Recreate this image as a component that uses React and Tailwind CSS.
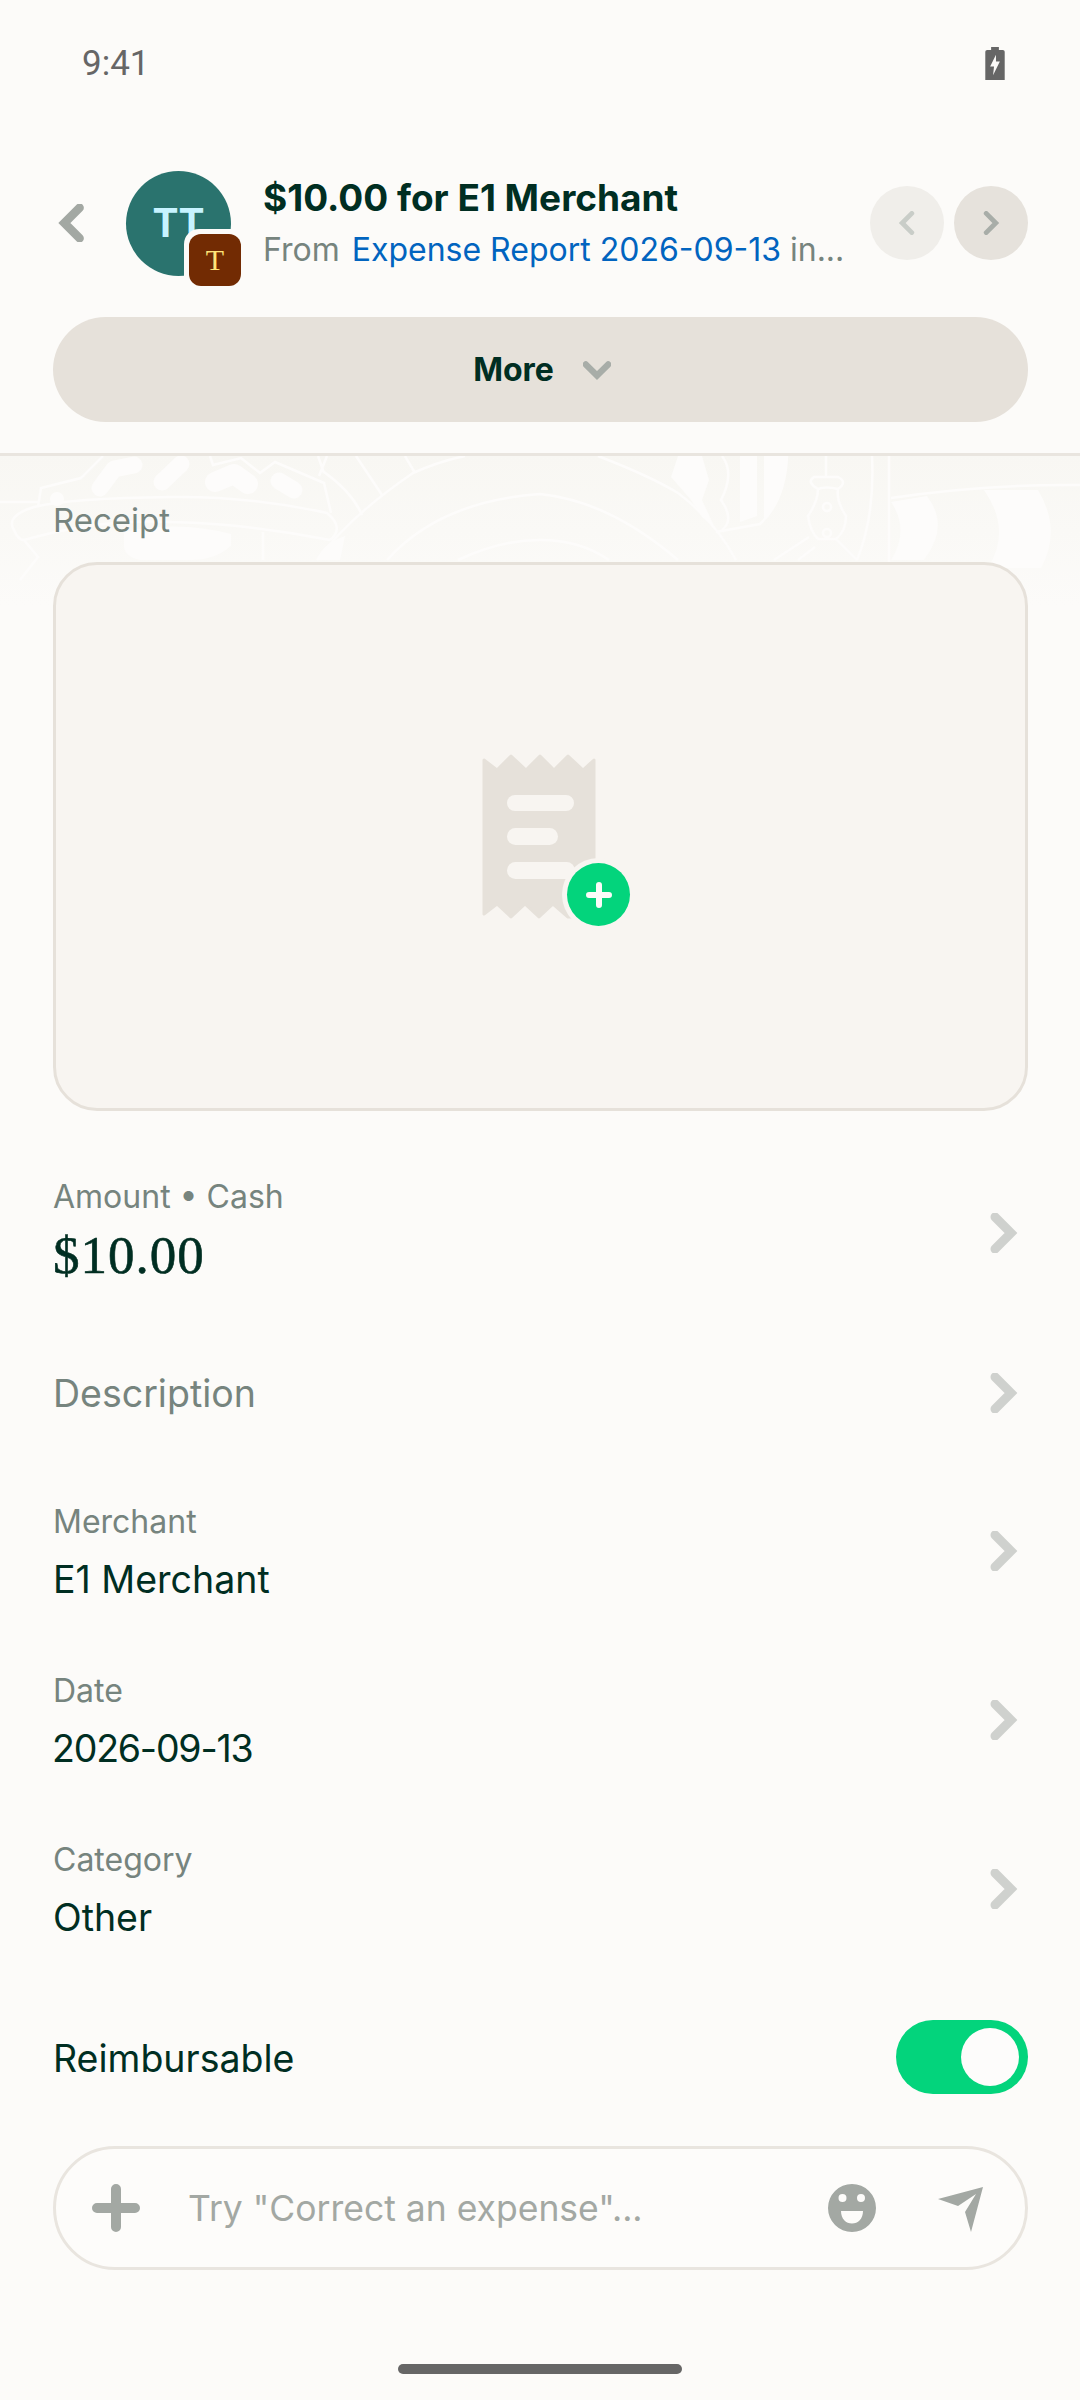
import React from "react";

function Chevron({ dir = "right", className = "", color = "#CFD1CE", size = 40, sw = 9 }) {
  const rot = { right: 0, left: 180, down: 90 }[dir];
  return (
    <svg width={size} height={size} viewBox="0 0 40 40" className={className} style={{ transform: `rotate(${rot}deg)` }}>
      <path d="M12 4 L28 20 L12 36" fill="none" stroke={color} strokeWidth={sw} strokeLinecap="round" strokeLinejoin="miter" />
    </svg>
  );
}

function Row({ label, value, h, serif, digits }) {
  return (
    <div className={`flex items-center justify-between ${h}`}>
      {serif ? (
        <div className="flex flex-col pb-[4px]">
          <span className="text-[32px] leading-[44px] text-[#76847E]">{label}</span>
          <span className="mt-[5px] text-[53px] leading-[62px] tracking-[1px] text-[#002E22] [-webkit-text-stroke:0.6px_#002E22] font-['Liberation_Serif',serif]">{value}</span>
        </div>
      ) : (
        <div className="flex flex-col pt-[10px]">
          <span className="text-[32px] leading-[44px] text-[#76847E]">{label}</span>
          <span className={`text-[37.5px] leading-[58px] text-[#002E22] mt-[7px] ${digits ? "tracking-[-1.2px] -ml-[1px]" : ""}`}>{value}</span>
        </div>
      )}
      <Chevron className="mr-[5px] mt-[2px]" />
    </div>
  );
}

function Pattern() {
  const c = "#FDFCFB";
  return (
    <svg className="absolute left-0 top-0 w-full h-[150px]" viewBox="0 0 1080 150" fill="none" stroke={c} strokeWidth="2.5">
      <defs>
        <linearGradient id="fade" x1="0" y1="0" x2="0" y2="1">
          <stop offset="0" stopColor="#F8F7F3" />
          <stop offset="1" stopColor="#FCFBF9" />
        </linearGradient>
      </defs>
      <rect width="1080" height="150" fill="url(#fade)" stroke="none" />
      {/* left cluster */}
      <path d="M103 0 L81 22 L41 32 L38 51 M0 46 L38 46" />
      <path d="M330 84 Q345 72 327 57 Q250 40 172 41 Q70 42 34 51 Q5 60 14 74 Q18 84 24 84 Q100 62 172 66 Q250 68 330 84" />
      <path d="M24 84 L38 101 L20 124" />
      <path d="M210 0 L213 9 L241 2 L260 17 L275 6 L324 27 L331 57 M324 17 L318 0 M327 0 L319 20 M324 16 Q352 36 362 59 M356 0 L382 39" />
      <path d="M317 104 Q350 60 413 17 Q440 5 465 0 M405 0 L415 17" />
      <path d="M387 104 Q440 45 540 38 Q609 45 678 104 M458 104 Q500 84 540 84 Q580 84 609 104" />
      <path d="M598 0 Q650 20 678 37 Q715 65 736 104" />
      <path d="M263 76 L263 104" />
      <g stroke={c} strokeLinecap="round" strokeLinejoin="round" strokeWidth="17">
        <path d="M100 32 L114 13 L134 9" />
        <path d="M162 26 L181 8" />
        <path d="M215 26 L234 18 L248 28" strokeWidth="20" />
        <path d="M279 25 L294 34" />
      </g>
      <circle cx="57" cy="43" r="7" fill={c} stroke="none" />
      <path d="M124 76 Q178 64 231 78 L231 90 Q215 104 190 104 L140 104 Q124 100 124 90 Z" fill={c} stroke="none" />
      <path d="M317 104 Q322 88 345 80 L340 104 Z" fill={c} stroke="none" />
      {/* right cluster */}
      <path d="M678 0 L671 21 L691 44 L702 61 L716 74 L702 44 L709 24 L702 0 Z" fill={c} stroke="none" />
      <path d="M722 0 Q735 17 721 44 Q735 64 722 74" />
      <path d="M716 76 L760 68 Q785 45 787 0" />
      <path d="M740 0 L757 0 L757 60 L740 66 Z M764 0 L787 0 Q785 45 764 64 Z" fill={c} stroke="none" />
      <path d="M826 0 L826 21" />
      <path d="M818 33 Q806 26 814 21 L838 21 Q848 26 838 33 Q826 30 818 33 Q818 45 808 60 Q810 75 818 83 L836 83 Q846 75 846 60 Q836 45 838 33" />
      <circle cx="827" cy="51" r="4" />
      <circle cx="827" cy="77" r="4" />
      <path d="M774 104 L809 81 M798 104 L815 91 M836 83 L857 104" />
      <path d="M872 0 Q875 60 857 104 M889 0 L889 150" />
      <path d="M891 42 Q988 28 1080 29" />
      <path d="M891 46 L927 40 Q950 70 924 104 L891 104 Q910 74 891 46 Z" fill={c} stroke="none" />
      <path d="M984 34 L1038 34 Q1062 74 1041 112 L988 112 Q1012 74 984 34 Z" fill={c} stroke="none" />
    </svg>
  );
}

export default function App() {
  return (
    <div className="w-[1080px] h-[2400px] bg-[#FCFBF9] flex flex-col font-['Inter',sans-serif] overflow-hidden relative">
      {/* Status bar */}
      <div className="h-[126px] flex items-center justify-between pl-[82px] pr-[75px] shrink-0">
        <span className="text-[35px] text-[#666666] font-['Roboto',sans-serif] mt-[2px]">9:41</span>
        <svg width="20" height="33" viewBox="0 0 20 34">
          <path d="M6 0h8v3h4a2 2 0 0 1 2 2v29H0V5a2 2 0 0 1 2-2h4z" fill="#666666" />
          <path d="M11 8 L5 20 H9 L8 29 L15 15 H11 Z" fill="#FCFBF9" />
        </svg>
      </div>

      {/* Header */}
      <div className="flex items-center h-[161px] mt-[16px] pl-[53px] pr-[52px] shrink-0">
        <Chevron dir="left" color="#A3A8A3" size={38} sw={9} />
        <div className="relative w-[105px] h-[105px] rounded-full bg-[#2A736E] ml-[35px] mt-[1px] shrink-0 flex items-center justify-center">
          <span className="text-[39px] font-bold text-[#C7F3FF] leading-none -mt-[2px]">TT</span>
          <div className="absolute left-[58px] top-[58px] w-[62px] h-[62px] rounded-[15px] bg-[#FCFBF9] flex items-center justify-center">
            <div className="w-[52px] h-[52px] rounded-[12px] bg-[#722B03] flex items-center justify-center">
              <span className="text-[30px] text-[#FFE57A] leading-none font-['Liberation_Serif',serif]">T</span>
            </div>
          </div>
        </div>
        <div className="ml-[33px] pt-[3px] flex flex-col w-[575px] shrink-0">
          <span className="text-[37px] leading-[50px] font-bold text-[#002E22] whitespace-nowrap -ml-[1px]">$10.00 for E1 Merchant</span>
          <span className="text-[32px] leading-[50px] mt-[2px] text-[#76847E] whitespace-nowrap -ml-[1px]">
            From <span className="text-[#0164BF] ml-[3px]">Expense Report 2026-09-13</span> in...
          </span>
        </div>
        <div className="ml-auto flex items-center gap-[10px]">
          <div className="w-[74px] h-[74px] rounded-full bg-[#F0EEEA] flex items-center justify-center">
            <Chevron dir="left" size={24} sw={8} color="#C9CDC8" />
          </div>
          <div className="w-[74px] h-[74px] rounded-full bg-[#E6E2DC] flex items-center justify-center">
            <Chevron dir="right" size={24} sw={8} color="#A8ADA8" />
          </div>
        </div>
      </div>

      {/* More */}
      <div className="px-[53px] pr-[52px] mt-[14px] shrink-0">
        <div className="h-[105px] pl-[3px] rounded-full bg-[#E6E1DA] flex items-center justify-center gap-[29px]">
          <span className="text-[32px] font-bold text-[#002E22]">More</span>
          <Chevron dir="down" size={28} sw={9} color="#A8ADA8" />
        </div>
      </div>

      <div className="mt-[31px] h-[3px] bg-[#E9E5DF] shrink-0" />

      {/* Content */}
      <div className="relative flex-1 flex flex-col px-[53px] pr-[52px]">
        <Pattern />
        <div className="relative h-[106px] flex items-center">
          <span className="text-[33px] text-[#76847E] mt-[24px]">Receipt</span>
        </div>
        <div className="relative h-[549px] rounded-[44px] border-[3px] border-[#E6E1DA] bg-[#F8F5F1] flex items-center justify-center">
          <div className="relative w-[114px] h-[165px] -ml-[3px]">
            <svg width="114" height="166" viewBox="0 0 114 166">
              <path
                d="M2 6 L15 16 L29 2 L44 16 L58 2 L72 16 L86 2 L101 16 L112 6 L112 163 L86 163 L71 150 L57 163 L43 150 L29 163 L15 150 L2 160 Z"
                fill="#E6E1DA"
                stroke="#E6E1DA"
                strokeWidth="3"
                strokeLinejoin="round"
              />
              <rect x="25" y="41" width="67" height="16" rx="8" fill="#F8F5F1" />
              <rect x="25" y="74" width="51" height="17" rx="8.5" fill="#F8F5F1" />
              <rect x="25" y="108" width="68" height="17" rx="8.5" fill="#F8F5F1" />
            </svg>
            <div className="absolute left-[80px] top-[104px] w-[73px] h-[73px] rounded-full bg-[#F8F5F1] flex items-center justify-center">
              <div className="w-[63px] h-[63px] rounded-full bg-[#03D47C] flex items-center justify-center">
                <svg width="26" height="26" viewBox="0 0 26 26">
                  <path d="M13 3V23M3 13H23" stroke="#FCFBF9" strokeWidth="6" strokeLinecap="round" />
                </svg>
              </div>
            </div>
          </div>
        </div>

        <div className="mt-[32px] flex flex-col">
          <Row label="Amount • Cash" value="$10.00" h="h-[178px]" serif />
          <div className="flex items-center justify-between h-[144px]">
            <span className="text-[37.5px] text-[#76847E] mt-[3px]">Description</span>
            <Chevron className="mr-[5px]" />
          </div>
          <Row label="Merchant" value="E1 Merchant" h="h-[169px]" />
          <Row label="Date" value="2026-09-13" h="h-[169px]" digits />
          <Row label="Category" value="Other" h="h-[169px]" />
          <div className="flex items-center justify-between h-[168px]">
            <span className="text-[37.5px] text-[#002E22] mt-[6px]">Reimbursable</span>
            <div className="w-[132px] h-[74px] mt-[2px] rounded-full bg-[#03D47C] flex items-center justify-end pr-[9px]">
              <div className="w-[58px] h-[58px] rounded-full bg-[#FDFCFB]" />
            </div>
          </div>
        </div>

        {/* Composer */}
        <div className="mt-[6px] h-[124px] rounded-full border-[3px] border-[#E9E5DF] flex items-center bg-[#FDFCFA]">
          <svg width="48" height="48" viewBox="0 0 48 48" className="ml-[36px]">
            <path d="M24 5V43M5 24H43" stroke="#A3A8A3" strokeWidth="10" strokeLinecap="round" />
          </svg>
          <span className="ml-[48px] text-[35.5px] text-[#A3A8A3] mt-[2px]">Try "Correct an expense"...</span>
          <svg width="48" height="48" viewBox="0 0 48 48" className="ml-auto">
            <path
              fillRule="evenodd"
              fill="#A3A8A3"
              d="M24 0a24 24 0 1 0 0 48a24 24 0 0 0 0-48zM14.5 10a4 4 0 1 1 0 8a4 4 0 0 1 0-8zM33 10a4 4 0 1 1 0 8a4 4 0 0 1 0-8zM13 27H35C35 35 30 39.500 24 39.500S13 35 13 27z"
            />
          </svg>
          <svg width="46" height="46" viewBox="0 0 46 46" className="ml-[62px] mr-[41px] mt-[3px]">
            <path fill="#A3A8A3" d="M0 12 L45 0 L33 45 L27 25 L38 7 L20 19 Z" />
          </svg>
        </div>
      </div>

      <div className="absolute left-[398px] top-[2364px] w-[284px] h-[10px] rounded-full bg-[#666666]" />
    </div>
  );
}
